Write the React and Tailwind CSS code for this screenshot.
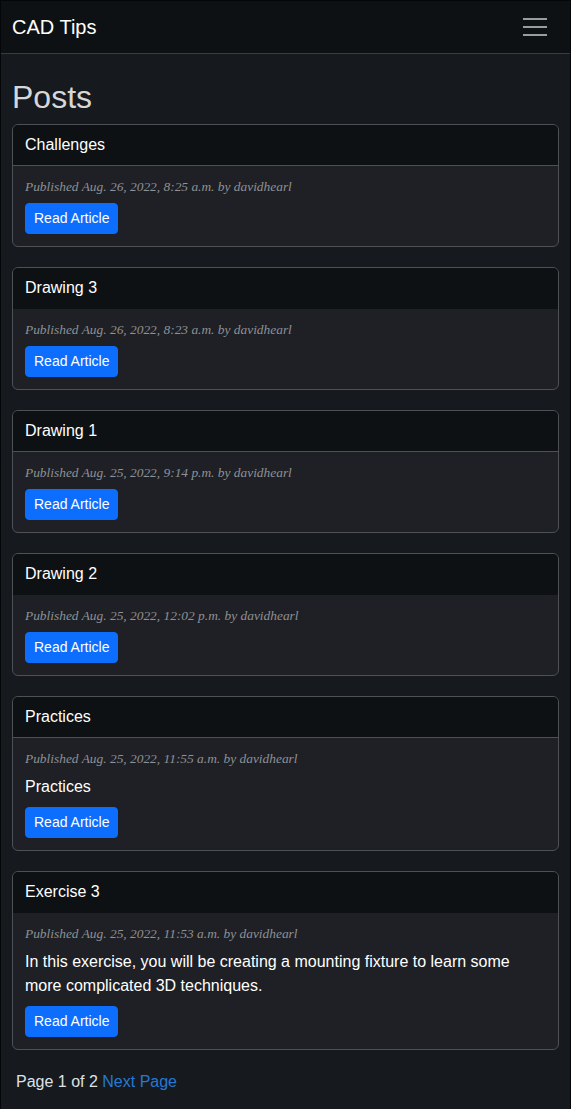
const posts = [
  { title: "Challenges", date: "Aug. 26, 2022, 8:25 a.m.", line: true },
  { title: "Drawing 3", date: "Aug. 26, 2022, 8:23 a.m.", line: false },
  { title: "Drawing 1", date: "Aug. 25, 2022, 9:14 p.m.", line: true },
  { title: "Drawing 2", date: "Aug. 25, 2022, 12:02 p.m.", line: false },
  { title: "Practices", date: "Aug. 25, 2022, 11:55 a.m.", line: true, text: "Practices" },
  {
    title: "Exercise 3",
    date: "Aug. 25, 2022, 11:53 a.m.",
    line: false,
    text: "In this exercise, you will be creating a mounting fixture to learn some more complicated 3D techniques.",
  },
];

const PostCard = ({ post }) => (
  <div className="mb-5 rounded-md border border-[#4d5054] bg-[#1e2025] overflow-hidden">
    {/* Card header */}
    <div
      className={`bg-[#0e1114] px-3 py-2 text-base leading-6 text-white border-b ${
        post.line ? "border-[#4d5054]" : "border-[#0e1114]"
      }`}
    >
      {post.title}
    </div>
    {/* Card body */}
    <div className="px-3 pt-3 pb-3">
      <p
        className="mb-2 text-[13.4px] leading-[17px] italic text-[#8e9195]"
        style={{ fontFamily: "'Liberation Serif', Georgia, serif" }}
      >
        Published {post.date} by davidhearl
      </p>
      {post.text && <p className="mb-2 text-base leading-6 text-white">{post.text}</p>}
      <button className="rounded bg-[#0d6efd] border border-[#0d6efd] px-2 py-1 text-sm leading-[21px] text-white">
        Read Article
      </button>
    </div>
  </div>
);

export default function App() {
  return (
    <div
      className="min-h-[1109px] bg-[#16191d] border-t border-l border-r border-[#050607] text-[#dee2e6]"
      style={{ fontFamily: "'Liberation Sans', Arial, sans-serif" }}
    >
      {/* Navbar */}
      <nav className="flex h-[53px] items-center justify-between border-b border-[#383b3f] bg-[#0e1114] px-[11px]">
        <span className="text-xl leading-[30px] text-white">CAD Tips</span>
        <button className="mr-[12px] flex flex-col gap-[6px]">
          <span className="block h-[2px] w-6 bg-[#9a9c9e]" />
          <span className="block h-[2px] w-6 bg-[#9a9c9e]" />
          <span className="block h-[2px] w-6 bg-[#9a9c9e]" />
        </button>
      </nav>

      <main className="px-[11px]">
        <h1 className="mt-6 mb-2 text-[32px] leading-[38px] text-[#d5d7d9]">Posts</h1>
        {posts.map((post) => (
          <PostCard key={post.title} post={post} />
        ))}
        <p className="pl-1 text-base leading-6 text-[#dee2e6]">
          Page 1 of 2 <a className="text-[#2479d6]">Next Page</a>
        </p>
      </main>
    </div>
  );
}
